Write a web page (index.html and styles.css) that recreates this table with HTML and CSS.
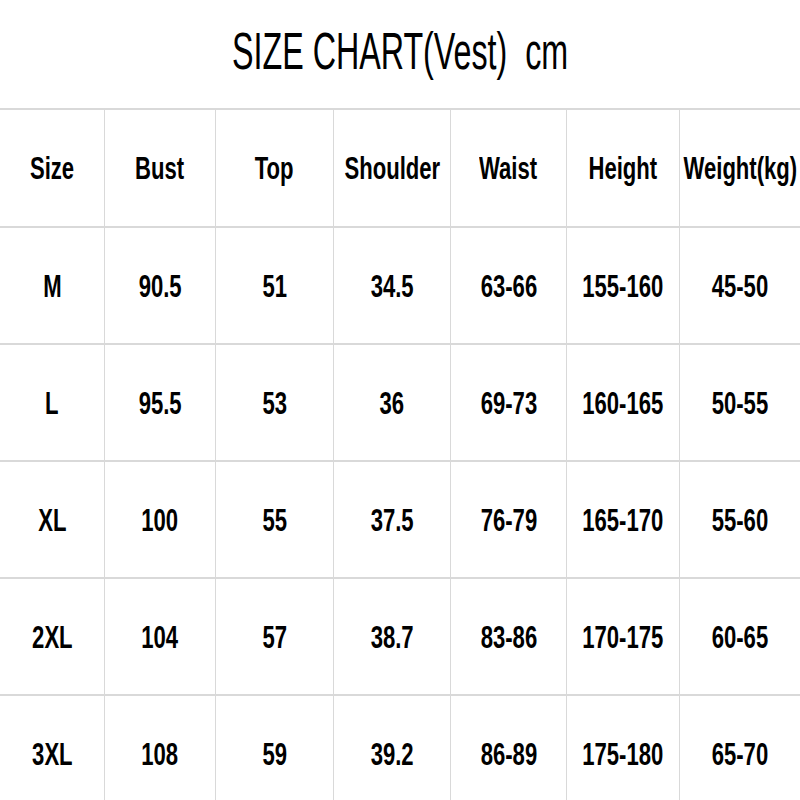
FILE: index.html
```html
<!DOCTYPE html>
<html>
<head>
<meta charset="utf-8">
<link rel="stylesheet" href="styles.css">
</head>
<body>
<div class="page">
  <header class="title-bar"><h1 class="title"><span>SIZE CHART(Vest)&nbsp; cm</span></h1></header>
  <div class="chart">
    <div class="cell head"><span>Size</span></div>
    <div class="cell head"><span>Bust</span></div>
    <div class="cell head"><span>Top</span></div>
    <div class="cell head"><span>Shoulder</span></div>
    <div class="cell head"><span>Waist</span></div>
    <div class="cell head"><span>Height</span></div>
    <div class="cell head"><span>Weight(kg)</span></div>

    <div class="cell"><span>M</span></div>
    <div class="cell"><span>90.5</span></div>
    <div class="cell"><span>51</span></div>
    <div class="cell"><span>34.5</span></div>
    <div class="cell"><span>63-66</span></div>
    <div class="cell"><span>155-160</span></div>
    <div class="cell"><span>45-50</span></div>

    <div class="cell"><span>L</span></div>
    <div class="cell"><span>95.5</span></div>
    <div class="cell"><span>53</span></div>
    <div class="cell"><span>36</span></div>
    <div class="cell"><span>69-73</span></div>
    <div class="cell"><span>160-165</span></div>
    <div class="cell"><span>50-55</span></div>

    <div class="cell"><span>XL</span></div>
    <div class="cell"><span>100</span></div>
    <div class="cell"><span>55</span></div>
    <div class="cell"><span>37.5</span></div>
    <div class="cell"><span>76-79</span></div>
    <div class="cell"><span>165-170</span></div>
    <div class="cell"><span>55-60</span></div>

    <div class="cell"><span>2XL</span></div>
    <div class="cell"><span>104</span></div>
    <div class="cell"><span>57</span></div>
    <div class="cell"><span>38.7</span></div>
    <div class="cell"><span>83-86</span></div>
    <div class="cell"><span>170-175</span></div>
    <div class="cell"><span>60-65</span></div>

    <div class="cell"><span>3XL</span></div>
    <div class="cell"><span>108</span></div>
    <div class="cell"><span>59</span></div>
    <div class="cell"><span>39.2</span></div>
    <div class="cell"><span>86-89</span></div>
    <div class="cell"><span>175-180</span></div>
    <div class="cell"><span>65-70</span></div>
  </div>
</div>
</body>
</html>
```

FILE: styles.css
```css
html, body {
  margin: 0;
  padding: 0;
  background: #ffffff;
}

.page {
  width: 800px;
  height: 800px;
  overflow: hidden;
  font-family: "Liberation Sans", Arial, sans-serif;
  color: #000;
}

.title-bar {
  height: 108px;
  box-sizing: border-box;
  padding-bottom: 6px;
  display: flex;
  align-items: center;
  justify-content: center;
}

.title {
  margin: 0;
  font-size: 52px;
  font-weight: normal;
  line-height: 1;
  white-space: nowrap;
}

.title span {
  display: inline-block;
  transform: scaleX(0.62);
}

.chart {
  display: grid;
  grid-template-columns: 104px 110px 117px 116px 115px 112px 120px;
  grid-template-rows: 116px repeat(5, 115px);
  column-gap: 1px;
  row-gap: 2px;
  background: #d9d9d9;
  border-top: 2px solid #d9d9d9;
}

.cell {
  background: #ffffff;
  display: flex;
  align-items: center;
  justify-content: center;
  font-size: 32px;
  font-weight: bold;
  line-height: 1;
  white-space: nowrap;
}

.cell span {
  display: inline-block;
  transform: scaleX(0.69);
}
```
